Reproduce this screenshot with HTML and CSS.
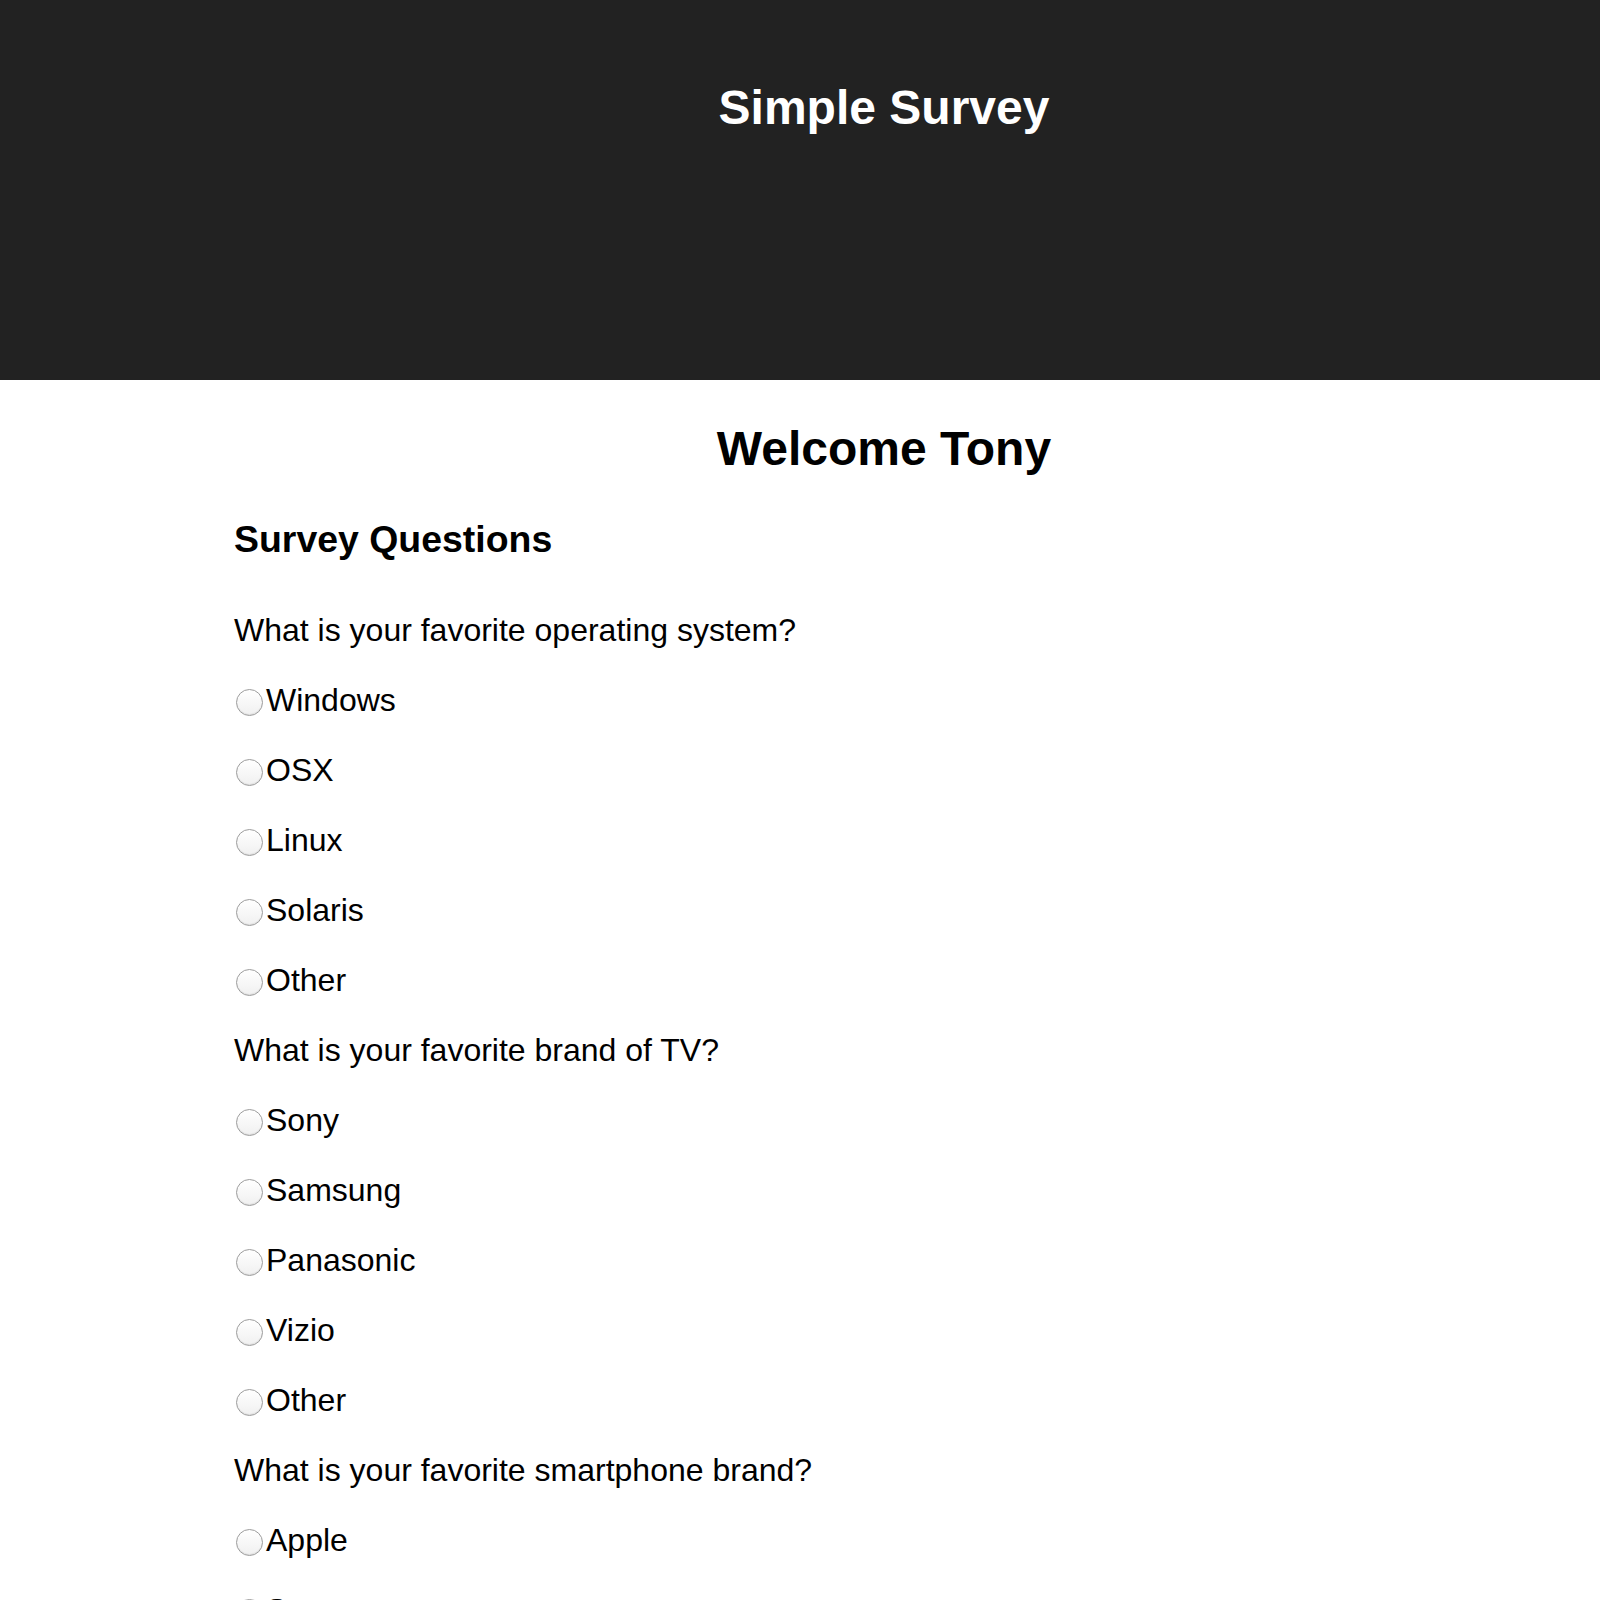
FILE: index.html
```html
<!DOCTYPE html>
<html lang="en">
<head>
<meta charset="utf-8">
<title>Simple Survey</title>
<link rel="stylesheet" href="styles.css">
</head>
<body>
<header class="top">
  <h2 class="title">Simple Survey</h2>
</header>
<main class="page">
  <h2 class="welcome">Welcome Tony</h2>
  <h3 class="section">Survey Questions</h3>
  <form class="survey">
    <p class="question">What is your favorite operating system?</p>
    <div class="option"><input class="radio" type="radio" name="os" id="os1"><label for="os1">Windows</label></div>
    <div class="option"><input class="radio" type="radio" name="os" id="os2"><label for="os2">OSX</label></div>
    <div class="option"><input class="radio" type="radio" name="os" id="os3"><label for="os3">Linux</label></div>
    <div class="option"><input class="radio" type="radio" name="os" id="os4"><label for="os4">Solaris</label></div>
    <div class="option"><input class="radio" type="radio" name="os" id="os5"><label for="os5">Other</label></div>
    <p class="question">What is your favorite brand of TV?</p>
    <div class="option"><input class="radio" type="radio" name="tv" id="tv1"><label for="tv1">Sony</label></div>
    <div class="option"><input class="radio" type="radio" name="tv" id="tv2"><label for="tv2">Samsung</label></div>
    <div class="option"><input class="radio" type="radio" name="tv" id="tv3"><label for="tv3">Panasonic</label></div>
    <div class="option"><input class="radio" type="radio" name="tv" id="tv4"><label for="tv4">Vizio</label></div>
    <div class="option"><input class="radio" type="radio" name="tv" id="tv5"><label for="tv5">Other</label></div>
    <p class="question">What is your favorite smartphone brand?</p>
    <div class="option"><input class="radio" type="radio" name="ph" id="ph1"><label for="ph1">Apple</label></div>
    <div class="option"><input class="radio" type="radio" name="ph" id="ph2"><label for="ph2">Samsung</label></div>
    <div class="option"><input class="radio" type="radio" name="ph" id="ph3"><label for="ph3">Google</label></div>
    <div class="option"><input class="radio" type="radio" name="ph" id="ph4"><label for="ph4">Other</label></div>
  </form>
</main>
</body>
</html>
```

FILE: styles.css
```css
html, body {
  margin: 0;
  padding: 0;
  background: #ffffff;
  color: #000000;
  font-family: "Liberation Sans", Arial, Helvetica, sans-serif;
}

.top {
  box-sizing: border-box;
  height: 380px;
  padding: 80px 66px 0 234px;
  background: #222222;
}

.title {
  margin: 0;
  font-size: 48px;
  line-height: 56px;
  font-weight: bold;
  color: #ffffff;
  text-align: center;
}

.page {
  padding: 0 66px 0 234px;
  overflow: hidden;
}

.welcome {
  margin: 41px 0 0;
  font-size: 48px;
  line-height: 56px;
  font-weight: bold;
  text-align: center;
}

.section {
  margin: 41px 0 50px;
  font-size: 37.44px;
  line-height: 43px;
  font-weight: bold;
}

.survey {
  margin: 0;
}

.question,
.option {
  margin: 32px 0;
  font-size: 32px;
  line-height: 38px;
}

.survey > .question:first-child {
  margin-top: 0;
}

.radio {
  -webkit-appearance: none;
  appearance: none;
  box-sizing: border-box;
  width: 27px;
  height: 27px;
  margin: 0 3px 0 2px;
  border: 1.5px solid #9c9c9c;
  border-radius: 50%;
  background: linear-gradient(#ffffff, #f0f0f0);
  box-shadow: inset 0 -1px 1px rgba(0, 0, 0, 0.08);
  vertical-align: -5px;
}
```
